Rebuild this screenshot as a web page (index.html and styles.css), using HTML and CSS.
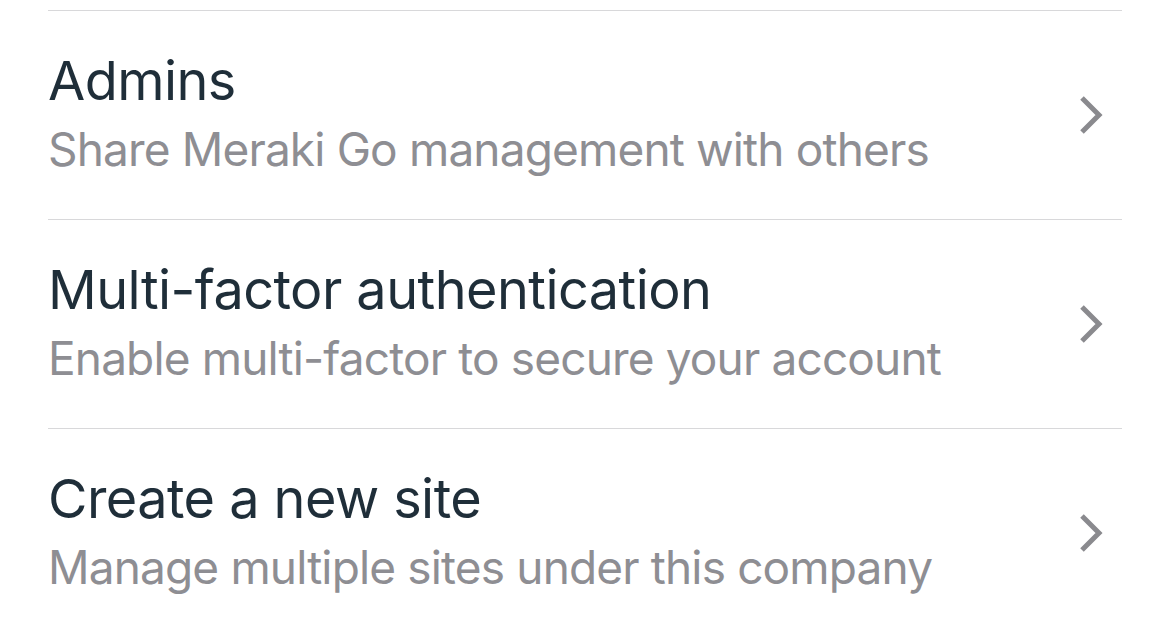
FILE: index.html
```html
<!DOCTYPE html>
<html>
<head>
<meta charset="utf-8">
<link rel="stylesheet" href="styles.css">
</head>
<body>
<div class="list">
  <div class="row">
    <div class="text">
      <div class="title">Admins</div>
      <div class="sub">Share Meraki Go management with others</div>
    </div>
    <svg class="chev" width="30" height="44" viewBox="0 0 30 44"><path d="M6 5 L23 22 L6 39" fill="none" stroke="#8a8a8e" stroke-width="5"/></svg>
  </div>
  <div class="row">
    <div class="text">
      <div class="title">Multi-factor authentication</div>
      <div class="sub">Enable multi-factor to secure your account</div>
    </div>
    <svg class="chev" width="30" height="44" viewBox="0 0 30 44"><path d="M6 5 L23 22 L6 39" fill="none" stroke="#8a8a8e" stroke-width="5"/></svg>
  </div>
  <div class="row">
    <div class="text">
      <div class="title">Create a new site</div>
      <div class="sub">Manage multiple sites under this company</div>
    </div>
    <svg class="chev" width="30" height="44" viewBox="0 0 30 44"><path d="M6 5 L23 22 L6 39" fill="none" stroke="#8a8a8e" stroke-width="5"/></svg>
  </div>
</div>
</body>
</html>
```
FILE: styles.css
```css
html, body {
  margin: 0;
  padding: 0;
  background: #ffffff;
}
body {
  font-family: Inter, "Noto Sans", sans-serif;
  width: 1170px;
  height: 636px;
  overflow: hidden;
}
.list {
  padding: 10px 48px 0 48px;
}
.row {
  display: flex;
  align-items: center;
  justify-content: space-between;
  border-top: 1px solid #d8d8da;
  height: 208px;
  box-sizing: content-box;
}
.text {
  display: flex;
  flex-direction: column;
  margin-top: -4px;
}
.title {
  font-size: 54px;
  line-height: 72px;
  letter-spacing: -0.55px;
  color: #1f2e39;
}
.sub {
  font-size: 46px;
  line-height: 64px;
  letter-spacing: -0.85px;
  color: #8e8e93;
}
.chev {
  margin-right: 16px;
  flex: none;
}
```
